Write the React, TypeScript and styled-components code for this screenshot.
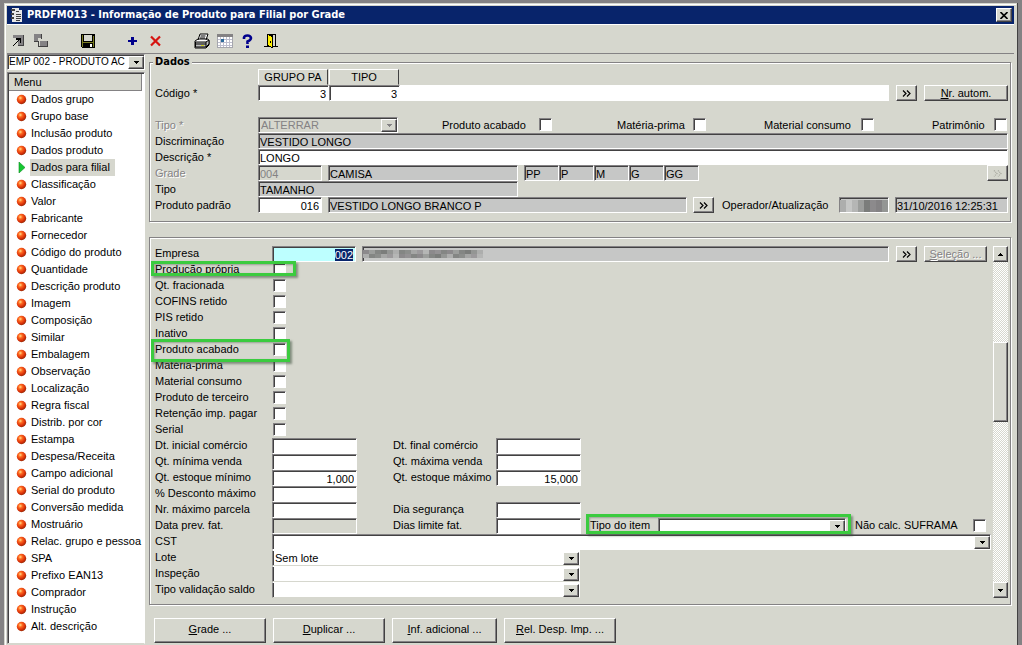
import React, { useEffect, useRef } from 'react';
import styled, { createGlobalStyle, css } from 'styled-components';

const face = '#d6d7ce';
const shade = '#848284';
const dark = '#424142';
const navy = '#08246b';
const readonlyGrey = '#c6c7c6';

const GlobalStyle = createGlobalStyle`
  * { box-sizing: border-box; }
  body { margin: 0; background: ${shade}; }
  body, button, input, select { font: 11px/14px "Liberation Sans", Arial, sans-serif; color: #000; }
  ul { list-style: none; margin: 0; padding: 0; }
`;

const Desktop = styled.div`
  min-height: 100vh;
  padding: 3px 5px 0 4px;
  display: flex;
  background: ${shade};
`;

const Window = styled.main`
  flex: 1;
  min-width: 0;
  display: flex;
  flex-direction: column;
  background: ${face};
  border: 1px solid ${face};
  border-bottom: 0;
  box-shadow: inset 1px 1px #fff, 1px 0 ${dark};
  padding: 2px 2px 0;
`;

const TitleBar = styled.header`
  height: 18px;
  display: flex;
  align-items: center;
  gap: 4px;
  padding: 0 2px 0 4px;
  background: ${navy};
  color: #fff;
`;

const Title = styled.h1`
  flex: 1;
  margin: 0;
  font: bold 11px/16px "DejaVu Sans Condensed", "DejaVu Sans", sans-serif;
  white-space: nowrap;
`;

const raised = css`
  border: 1px solid;
  border-color: #fff ${dark} ${dark} #fff;
  box-shadow: inset -1px -1px ${shade};
  background: ${face};
`;

const CloseButton = styled.button`
  ${raised}
  width: 16px;
  height: 14px;
  padding: 0;
  display: grid;
  place-items: center;
`;

const Toolbar = styled.div`
  height: 30px;
  display: flex;
  align-items: center;
  padding: 3px 0 0 3px;
  border-top: 1px solid #fff;
  border-bottom: 1px solid ${shade};
`;

const ToolButton = styled.button<{ $lead?: number }>`
  width: 18px;
  height: 18px;
  margin-left: ${p => p.$lead ?? 5}px;
  padding: 0;
  border: 0;
  background: none;
  svg { display: block; margin: 1px; }
`;

const Body = styled.div`
  flex: 1;
  display: flex;
  gap: 4px;
`;

const Sidebar = styled.nav`
  width: 138px;
  flex: none;
  display: flex;
  flex-direction: column;
  gap: 2px;
`;

const MenuPanel = styled.div`
  flex: 1;
  margin-bottom: 1px;
  background: #fff;
  border: 1px solid ${shade};
  border-right-color: #fff;
  border-bottom-color: ${face};
  box-shadow: inset 1px 1px ${dark};
  padding: 1px 2px 0 1px;
`;

const MenuHeader = styled.div`
  height: 17px;
  padding: 1px 5px 0;
  background: ${face};
  border-right: 1px solid ${shade};
  border-bottom: 1px solid ${shade};
`;

const MenuList = styled.ul`
  padding: 0 0 0 7px;
`;

const MenuItem = styled.li`
  height: 17px;
  display: flex;
  align-items: center;
  gap: 3px;
  svg { flex: none; }
`;

const MenuLink = styled.a<{ $current: boolean }>`
  padding: 1px 5px 2px 1px;
  color: #000;
  text-decoration: none;
  white-space: nowrap;
  background: ${p => (p.$current ? face : 'transparent')};
`;

const Main = styled.div`
  flex: 1;
  min-width: 0;
  display: flex;
  flex-direction: column;
`;

const Group = styled.section`
  margin-right: 3px;
  border: 1px solid ${shade};
  box-shadow: inset 1px 1px #fff, 1px 1px #fff;
`;

const DataGroup = styled(Group)`
  margin-top: 8px;
  padding: 0 2px 8px 5px;
`;

const DetailGroup = styled(Group)`
  margin-top: 15px;
  padding: 8px 2px 6px 5px;
  display: flex;
  gap: 2px;
`;

const Legend = styled.h2`
  width: max-content;
  height: 14px;
  margin: -8px 0 0 -2px;
  padding: 0 2px;
  background: ${face};
  font: bold 11px/14px "DejaVu Sans Condensed", "DejaVu Sans", sans-serif;
`;

const Row = styled.div<{ $after?: number }>`
  position: relative;
  height: 16px;
  display: flex;
  align-items: stretch;
  margin-bottom: ${p => p.$after ?? 0}px;
`;

const Label = styled.label<{ $w?: number; $muted?: boolean }>`
  flex: none;
  width: ${p => (p.$w ? p.$w + 'px' : 'auto')};
  line-height: 16px;
  white-space: nowrap;
  color: ${p => (p.$muted ? shade : '#000')};
  text-shadow: ${p => (p.$muted ? '1px 1px #fff' : 'none')};
`;

const Field = styled.input<{ $w?: number; $tone?: string; $right?: boolean; $muted?: boolean }>`
  width: ${p => (p.$w ? p.$w + 'px' : '0')};
  flex: ${p => (p.$w ? 'none' : '1')};
  min-width: 0;
  height: 16px;
  padding: 1px 2px 0 1px;
  border: 1px solid;
  border-color: ${shade} #fff #fff ${shade};
  box-shadow: inset 1px 1px ${dark};
  border-radius: 0;
  outline: 0;
  background: ${p => p.$tone ?? '#fff'};
  color: ${p => (p.$muted ? shade : '#000')};
  text-align: ${p => (p.$right ? 'right' : 'left')};
  &::selection { background: ${navy}; color: #fff; }
`;

const PlainField = styled(Field)`
  border-color: #fff;
  box-shadow: none;
`;

const Space = styled.span<{ $w?: number }>`
  flex: ${p => (p.$w ? 'none' : '1')};
  width: ${p => (p.$w ? p.$w + 'px' : 'auto')};
`;

const ColumnHead = styled.div`
  ${raised}
  width: 70px;
  margin-right: 1px;
  line-height: 15px;
  text-align: center;
  box-shadow: none;
  border-bottom-color: ${face};
`;

const PushButton = styled.button<{ $w: number; $muted?: boolean }>`
  ${raised}
  flex: none;
  width: ${p => p.$w}px;
  height: 16px;
  padding: 0;
  line-height: 12px;
  white-space: nowrap;
  color: ${p => (p.$muted ? shade : '#000')};
  text-shadow: ${p => (p.$muted ? '1px 1px #fff' : 'none')};
  svg { display: block; margin: 0 auto; }
`;

const Footer = styled.footer`
  display: flex;
  gap: 7px;
  padding: 13px 0 1px 5px;
  ${PushButton} { height: 25px; padding-bottom: 3px; }
`;

const Tick = styled.input`
  appearance: none;
  flex: none;
  width: 13px;
  height: 13px;
  margin: 1px 0 0 1px;
  border: 1px solid;
  border-color: ${shade} #fff #fff ${shade};
  box-shadow: inset 1px 1px ${dark};
  background: #fff;
`;

const ComboBox = styled.span<{ $w?: number; $tone?: string; $stacked?: boolean }>`
  position: relative;
  display: flex;
  flex: ${p => (p.$w ? 'none' : '1')};
  min-width: 0;
  width: ${p => (p.$w ? p.$w + 'px' : 'auto')};
  height: 16px;
  border: 1px solid;
  border-color: ${p => (p.$stacked ? `#fff #fff ${face}` : `${shade} #fff #fff`)} ${shade};
  box-shadow: inset 1px ${p => (p.$stacked ? 0 : '1px')} ${dark};
  background: ${p => p.$tone ?? '#fff'};
`;

const ComboSelect = styled.select<{ $muted?: boolean; $small?: boolean }>`
  appearance: none;
  flex: 1;
  width: 0;
  min-width: 0;
  padding: 0 16px 0 ${p => (p.$small ? 1 : 2)}px;
  border: 0;
  outline: 0;
  background: transparent;
  font-size: ${p => (p.$small ? 10 : 11)}px;
  line-height: 14px;
  opacity: 1;
  color: ${p => (p.$muted ? shade : '#000')};
`;

const ComboArrow = styled.span`
  ${raised}
  position: absolute;
  top: 1px;
  right: 0;
  bottom: 0;
  width: 16px;
  display: grid;
  place-items: center;
  pointer-events: none;
`;

const Rows = styled.div`
  flex: 1;
  min-width: 0;
  ${Label} { line-height: 14px; }
`;

const ScrollTrack = styled.div`
  width: 15px;
  display: flex;
  flex-direction: column;
  background: repeating-conic-gradient(#fff 0 25%, ${face} 0 50%) 0 0 / 2px 2px;
`;

const ScrollThumb = styled.div`
  ${raised}
  height: 80px;
  margin: 80px 0 auto;
`;

const Mark = styled.span<{ $left: number; $w: number; $top: number; $h: number }>`
  position: absolute;
  z-index: 2;
  left: ${p => p.$left}px;
  top: ${p => p.$top}px;
  width: ${p => p.$w}px;
  height: ${p => p.$h}px;
  border: 3px solid #3bcb3f;
  box-shadow: 2px 2px 2px rgba(60, 80, 60, 0.55), inset 1px 1px 2px rgba(60, 80, 60, 0.4);
  pointer-events: none;
`;

const Redacted = styled.span<{ $w?: number }>`
  display: flex;
  align-items: center;
  flex: ${p => (p.$w ? 'none' : '1')};
  width: ${p => (p.$w ? p.$w + 'px' : 'auto')};
  height: 16px;
  border: 1px solid;
  border-color: ${shade} #fff #fff ${shade};
  box-shadow: inset 1px 1px ${dark};
  background: ${readonlyGrey};
  overflow: hidden;
`;

const Arrow = ({ up, muted }: { up?: boolean; muted?: boolean }) => (
  <svg width="5" height="3" viewBox="0 0 5 3" shapeRendering="crispEdges">
    <path d={up ? 'M2 0h1v1h1v1h1v1H0V2h1V1h1z' : 'M0 0h5v1H4v1H3v1H2V2H1V1H0z'} fill={muted ? shade : '#000'} />
  </svg>
);

const Chevrons = ({ muted }: { muted?: boolean }) => (
  <svg width="9" height="7" viewBox="0 0 9 7">
    <path d="M1 .5l3 3-3 3M5 .5l3 3-3 3" fill="none" stroke={muted ? '#a5a69c' : '#000'} strokeWidth="1.2" strokeDasharray={muted ? '1 1' : undefined} />
  </svg>
);

const Ball = () => (
  <svg width="11" height="11" viewBox="0 0 11 11">
    <defs>
      <radialGradient id="ball" cx=".38" cy=".34" r=".7">
        <stop offset="0" stopColor="#ffe08a" />
        <stop offset=".3" stopColor="#ff6a20" />
        <stop offset=".7" stopColor="#d93008" />
        <stop offset="1" stopColor="#8e2a08" />
      </radialGradient>
    </defs>
    <circle cx="5.5" cy="5.5" r="4.7" fill="url(#ball)" />
  </svg>
);

const Play = () => (
  <svg width="11" height="11" viewBox="0 0 11 11">
    <path d="M3 0L9 5.500L3 11z" fill="#16c832" stroke="#0c8a20" strokeWidth=".6" />
  </svg>
);

const Pic = ({ children }: { children: React.ReactNode }) => (
  <svg width="16" height="16" viewBox="0 0 16 16" shapeRendering="crispEdges">{children}</svg>
);

const tools: { name: string; lead: number; art: React.ReactNode }[] = [
  {
    name: 'Abrir', lead: 0, art: (
      <Pic>
        <path d="M2 2h11v11H2z" fill={shade} />
        <path d="M2 5h5v8H2z" fill={face} />
        <path d="M5 5h5v5H9V7H8v1H7v1H6v1H5v1H4v1H3v1H2v-1h1v-1h1v-1h1V9h1V8h1V7H5z" fill="#000" />
        <path d="M12 2h1v11h-1zM7 12h6v1H7z" fill={dark} />
      </Pic>
    ),
  },
  {
    name: 'Navegar', lead: 4, art: (
      <Pic>
        <path d="M1 1h8v4H5v4H1z" fill={shade} />
        <path d="M7 8h7v5H7z" fill={shade} />
        <path d="M1 8h5v1H1zM8 1h1v5H8zM5 9h1v4h2v1H5zM14 8h1v6H8v-1h6z" fill={dark} />
      </Pic>
    ),
  },
  { name: 'Salvar', lead: 29, art: <Pic><path d="M1 1h14v14H2l-1-1z" fill="#000" /><path d="M2 2h1v12H2zM13 3h1v11h-1zM3 9h10v1H3z" fill="#7b7d21" /><path d="M4 2h8v6H4z" fill="#d6d7ce" /><path d="M10 11h2v3h-2z" fill="#fff" /></Pic> },
  { name: 'Incluir', lead: 26, art: <Pic><path d="M7 4h3v3h3v2h-3v3H7V9H4V7h3z" fill="#00008c" /></Pic> },
  { name: 'Excluir', lead: 5, art: <svg width="16" height="16" viewBox="0 0 16 16"><path d="M4 3.500l9 9M13 3.500l-9 9" stroke="#d61410" strokeWidth="2.200" /></svg> },
  { name: 'Imprimir', lead: 29, art: <svg width="16" height="16" viewBox="0 0 16 16"><path d="M4 7l2-6h8l-2 6M1 8l3-2h10l1 2v4l-3 3H1z" fill="#fff" stroke="#000" /><path d="M1.500 9h10.500l3-2v4l-3 3H1.500z" fill="#bdbebd" stroke="#000" /><path d="M12 9v5M2 11h10M6.500 3h5M6 5h5" stroke="#000" /><path d="M7 12.500h3" stroke="#cfcf20" /></svg> },
  { name: 'Calendário', lead: 5, art: <Pic><path d="M0 1h16v14H0z" fill="#a5a6ad" /><path d="M0 1h16v3H0z" fill={shade} /><path d="M1 4h14v10H1z" fill="#fff" /><path d="M3 4h1v10H3zM6 4h1v10H6zM9 4h1v10H9zM12 4h1v10h-1zM1 6h14v1H1zM1 9h14v1H1zM1 12h14v1H1z" fill="#bdbece" /><path d="M4 6h3v3H4z" fill="#2b6a9a" /></Pic> },
  { name: 'Ajuda', lead: 5, art: <svg width="16" height="16" viewBox="0 0 16 16"><path d="M4 6V4.500Q4.500 2.500 7.500 2.500T11 5Q11 7 7.500 8.500V11" fill="none" stroke="#00008c" strokeWidth="2.600" /><path d="M6 12.500h3V15H6z" fill="#00008c" /></svg> },
  { name: 'Sair', lead: 5, art: <Pic><path d="M4 1h9v12h2v1h-5v1H8v-1H1v-1h3z" fill="#000" /><path d="M10 2h2v11h-2z" fill="#d6d7ce" /><path d="M5 2l4 2v10l-4-2z" fill="#ffef00" /><path d="M7 8h1v2H7z" fill="#000" /></Pic> },
];

const menu = [
  'Dados grupo', 'Grupo base', 'Inclusão produto', 'Dados produto', 'Dados para filial', 'Classificação',
  'Valor', 'Fabricante', 'Fornecedor', 'Código do produto', 'Quantidade', 'Descrição produto', 'Imagem',
  'Composição', 'Similar', 'Embalagem', 'Observação', 'Localização', 'Regra fiscal', 'Distrib. por cor',
  'Estampa', 'Despesa/Receita', 'Campo adicional', 'Serial do produto', 'Conversão medida', 'Mostruário',
  'Relac. grupo e pessoa', 'SPA', 'Prefixo EAN13', 'Comprador', 'Instrução', 'Alt. descrição',
];

const flags: { name: string; mark?: { $left: number; $w: number; $top: number; $h: number } }[] = [
  { name: 'Produção própria', mark: { $left: -4, $w: 145, $top: -1, $h: 15 } },
  { name: 'Qt. fracionada' }, { name: 'COFINS retido' }, { name: 'PIS retido' }, { name: 'Inativo' },
  { name: 'Produto acabado', mark: { $left: -4, $w: 139, $top: -3, $h: 23 } },
  { name: 'Matéria-prima' }, { name: 'Material consumo' }, { name: 'Produto de terceiro' },
  { name: 'Retenção imp. pagar' }, { name: 'Serial' },
];

const limits = [
  { name: 'Dt. inicial comércio', value: '', pair: 'Dt. final comércio', pairValue: '' },
  { name: 'Qt. mínima venda', value: '', pair: 'Qt. máxima venda', pairValue: '' },
  { name: 'Qt. estoque mínimo', value: '1,000', pair: 'Qt. estoque máximo', pairValue: '15,000' },
  { name: '% Desconto máximo', value: '' },
  { name: 'Nr. máximo parcela', value: '', pair: 'Dia segurança', pairValue: '' },
];

type ComboProps = { id: string; value?: string; w?: number; muted?: boolean; name?: string; stacked?: boolean; small?: boolean };

const Combo = ({ id, value = '', w, muted, name, stacked, small }: ComboProps) => (
  <ComboBox $w={w} $tone={muted ? face : undefined} $stacked={stacked}>
    <ComboSelect id={id} $muted={muted} $small={small} disabled={muted} aria-label={name}>
      <option>{value}</option>
    </ComboSelect>
    <ComboArrow><Arrow muted={muted} /></ComboArrow>
  </ComboBox>
);

const wideBlocks = ['#8c8a8c', '#9c9e9c', '#848684', '#7b7d7b', '#949694', '#adaead', '#848684', '#8c8e8c', '#a5a6a5', '#9c9a9c', '#b5b6b5', '#8c8a8c', '#949294', '#848684'];
const tallBlocks = ['#adaead', '#c6c7c6', '#b5b6b5', '#9c9e9c', '#7b7d7b', '#8c8a8c', '#848284', '#949694'];

const Mosaic = ({ count, tall }: { count: number; tall?: boolean }) => {
  const tones = tall ? tallBlocks : wideBlocks;
  const h = tall ? 6 : 4;
  return (
    <svg width={count * 6} height="14" viewBox={`0 0 ${count * 6} 14`} shapeRendering="crispEdges">
      {Array.from({ length: count * 2 }, (_, i) => {
        const col = i >> 1;
        const row = i % 2;
        return <rect key={i} x={col * 6} y={(tall ? 2 : 3) + row * h} width="6" height={h} fill={tones[(col + row * (tall ? 0 : 5)) % tones.length]} />;
      })}
    </svg>
  );
};

const checks = [
  { id: 'acabado', name: 'Produto acabado', w: 96, lead: 0 },
  { id: 'prima', name: 'Matéria-prima', w: 75, lead: 65 },
  { id: 'consumo', name: 'Material consumo', w: 96, lead: 58 },
  { id: 'patrimonio', name: 'Patrimônio', w: 61, lead: 58 },
];

export default function App() {
  const company = useRef<HTMLInputElement>(null);
  useEffect(() => {
    company.current?.focus();
    company.current?.select();
  }, []);

  return (
    <>
      <GlobalStyle />
      <Desktop>
        <Window>
          <TitleBar>
            <svg width="12" height="16" viewBox="0 0 12 16" shapeRendering="crispEdges">
              <path d="M1 1h7v2h3v12H1z" fill="#e7e7e7" />
              <path d="M0 2h4v2H0zM0 6h3v2H0zM0 10h3v2H0zM5 4h3v1H5zM5 7h5v1H5zM5 9h5v1H5zM5 11h5v1H5zM5 13h4v1H5z" fill="#424142" />
            </svg>
            <Title>PRDFM013 - Informação de Produto para Filial por Grade</Title>
            <CloseButton aria-label="Fechar">
              <svg width="8" height="7" viewBox="0 0 8 7"><path d="M.5 0l7 7M7.500 0l-7 7" stroke="#000" strokeWidth="1.600" /></svg>
            </CloseButton>
          </TitleBar>
          <Toolbar>
            {tools.map(t => <ToolButton key={t.name} aria-label={t.name} $lead={t.lead}>{t.art}</ToolButton>)}
          </Toolbar>
          <Body>
            <Sidebar>
              <Row><Combo id="empresa-ativa" value="EMP 002 - PRODUTO AC" name="Empresa ativa" small /></Row>
              <MenuPanel>
                <MenuHeader>Menu</MenuHeader>
                <MenuList>
                  {menu.map((m, i) => (
                    <MenuItem key={m}>
                      {i === 4 ? <Play /> : <Ball />}
                      <MenuLink href="#" $current={i === 4}>{m}</MenuLink>
                    </MenuItem>
                  ))}
                </MenuList>
              </MenuPanel>
            </Sidebar>
            <Main>
              <DataGroup>
                <Legend>Dados</Legend>
                <Row>
                  <Space $w={103} />
                  <ColumnHead>GRUPO PA</ColumnHead>
                  <ColumnHead>TIPO</ColumnHead>
                </Row>
                <Row $after={16}>
                  <Label $w={103} htmlFor="codigo">Código *</Label>
                  <Field id="codigo" $w={71} $right defaultValue="3" />
                  <Field $w={71} $right defaultValue="3" aria-label="Tipo do código" />
                  <PlainField aria-label="Nome do código" />
                  <Space $w={7} />
                  <PushButton $w={21} aria-label="Buscar código"><Chevrons /></PushButton>
                  <Space $w={7} />
                  <PushButton $w={84}><u>N</u>r. autom.</PushButton>
                </Row>
                <Row>
                  <Label $w={103} $muted htmlFor="tipo">Tipo *</Label>
                  <Combo id="tipo" w={140} value="ALTERRAR" muted />
                  <Space />
                  {checks.map(c => (
                    <React.Fragment key={c.id}>
                      {c.lead > 0 && <Space $w={c.lead} />}
                      <Label $w={c.w} htmlFor={c.id}>{c.name}</Label>
                      <Tick type="checkbox" id={c.id} />
                    </React.Fragment>
                  ))}
                  <Space $w={1} />
                </Row>
                <Row>
                  <Label $w={103} htmlFor="discriminacao">Discriminação</Label>
                  <Field id="discriminacao" $tone={readonlyGrey} readOnly defaultValue="VESTIDO LONGO" />
                </Row>
                <Row>
                  <Label $w={103} htmlFor="descricao">Descrição *</Label>
                  <Field id="descricao" defaultValue="LONGO" />
                </Row>
                <Row>
                  <Label $w={103} $muted htmlFor="grade">Grade</Label>
                  <Field id="grade" $w={64} $tone={face} $muted readOnly defaultValue="004" />
                  <Space $w={6} />
                  <Field $w={190} $tone={readonlyGrey} readOnly defaultValue="CAMISA" aria-label="Nome da grade" />
                  <Space $w={6} />
                  {['PP', 'P', 'M', 'G', 'GG'].map(s => (
                    <Field key={s} $w={35} $tone={readonlyGrey} readOnly defaultValue={s} aria-label={`Tamanho ${s}`} />
                  ))}
                  <Space />
                  <PushButton $w={21} disabled aria-label="Buscar grade"><Chevrons muted /></PushButton>
                </Row>
                <Row>
                  <Label $w={103} htmlFor="tipo-grade">Tipo</Label>
                  <Field id="tipo-grade" $w={260} $tone={readonlyGrey} readOnly defaultValue="TAMANHO" />
                </Row>
                <Row>
                  <Label $w={103} htmlFor="padrao">Produto padrão</Label>
                  <Field id="padrao" $w={64} $right defaultValue="016" />
                  <Space $w={6} />
                  <Field $tone={readonlyGrey} readOnly defaultValue="VESTIDO LONGO BRANCO P" aria-label="Nome do produto padrão" />
                  <Space $w={6} />
                  <PushButton $w={21} aria-label="Buscar produto"><Chevrons /></PushButton>
                  <Space $w={8} />
                  <Label $w={117} htmlFor="atualizacao">Operador/Atualização</Label>
                  <Redacted $w={50}><Mosaic count={8} tall /></Redacted>
                  <Space $w={6} />
                  <Field id="atualizacao" $w={113} $tone={readonlyGrey} readOnly defaultValue="31/10/2016 12:25:31" />
                </Row>
              </DataGroup>

              <DetailGroup>
                <Rows>
                  <Row>
                    <Label $w={117} htmlFor="empresa">Empresa</Label>
                    <Field id="empresa" ref={company} $w={84} $right $tone="#bdffff" defaultValue="002" />
                    <Space $w={6} />
                    <Redacted><Mosaic count={20} /></Redacted>
                    <Space $w={7} />
                    <PushButton $w={21} aria-label="Buscar empresa"><Chevrons /></PushButton>
                    <Space $w={7} />
                    <PushButton $w={63} $muted disabled><u>S</u>eleção ...</PushButton>
                    <Space $w={4} />
                  </Row>
                  {flags.map(f => (
                    <Row key={f.name}>
                      <Label $w={117} htmlFor={f.name}>{f.name}</Label>
                      <Tick type="checkbox" id={f.name} />
                      {f.mark && <Mark {...f.mark} />}
                    </Row>
                  ))}
                  {limits.map(l => (
                    <Row key={l.name}>
                      <Label $w={117} htmlFor={l.name}>{l.name}</Label>
                      <Field id={l.name} $w={85} $right defaultValue={l.value} />
                      {l.pair && (
                        <>
                          <Space $w={36} />
                          <Label $w={103} htmlFor={l.pair}>{l.pair}</Label>
                          <Field id={l.pair} $w={85} $right defaultValue={l.pairValue} />
                        </>
                      )}
                    </Row>
                  ))}
                  <Row>
                    <Label $w={117} htmlFor="prev">Data prev. fat.</Label>
                    <Field id="prev" $w={85} $tone={face} />
                    <Space $w={36} />
                    <Label $w={103} htmlFor="limite">Dias limite fat.</Label>
                    <Field id="limite" $w={85} />
                    <Space $w={9} />
                    <Label $w={68} htmlFor="tipo-item">Tipo do item</Label>
                    <Combo id="tipo-item" w={188} />
                    <Space $w={9} />
                    <Label $w={117} htmlFor="suframa">Não calc. SUFRAMA</Label>
                    <Tick type="checkbox" id="suframa" />
                    <Mark $left={431} $w={265} $top={-4} $h={20} />
                  </Row>
                  <Row>
                    <Label $w={117} htmlFor="cst">CST</Label>
                    <Combo id="cst" />
                  </Row>
                  {[['Lote', 'Sem lote'], ['Inspeção', ''], ['Tipo validação saldo', '']].map(([n, v]) => (
                    <Row key={n}>
                      <Label $w={117} htmlFor={n}>{n}</Label>
                      <Combo id={n} w={308} value={v} stacked />
                    </Row>
                  ))}
                </Rows>
                <ScrollTrack>
                  <PushButton $w={15} aria-label="Rolar para cima"><Arrow up /></PushButton>
                  <ScrollThumb />
                  <PushButton $w={15} aria-label="Rolar para baixo"><Arrow /></PushButton>
                </ScrollTrack>
              </DetailGroup>

              <Footer>
                <PushButton $w={112}><u>G</u>rade ...</PushButton>
                <PushButton $w={112}><u>D</u>uplicar ...</PushButton>
                <PushButton $w={105}><u>I</u>nf. adicional ...</PushButton>
                <PushButton $w={112}><u>R</u>el. Desp. Imp. ...</PushButton>
              </Footer>
            </Main>
          </Body>
        </Window>
      </Desktop>
    </>
  );
}
